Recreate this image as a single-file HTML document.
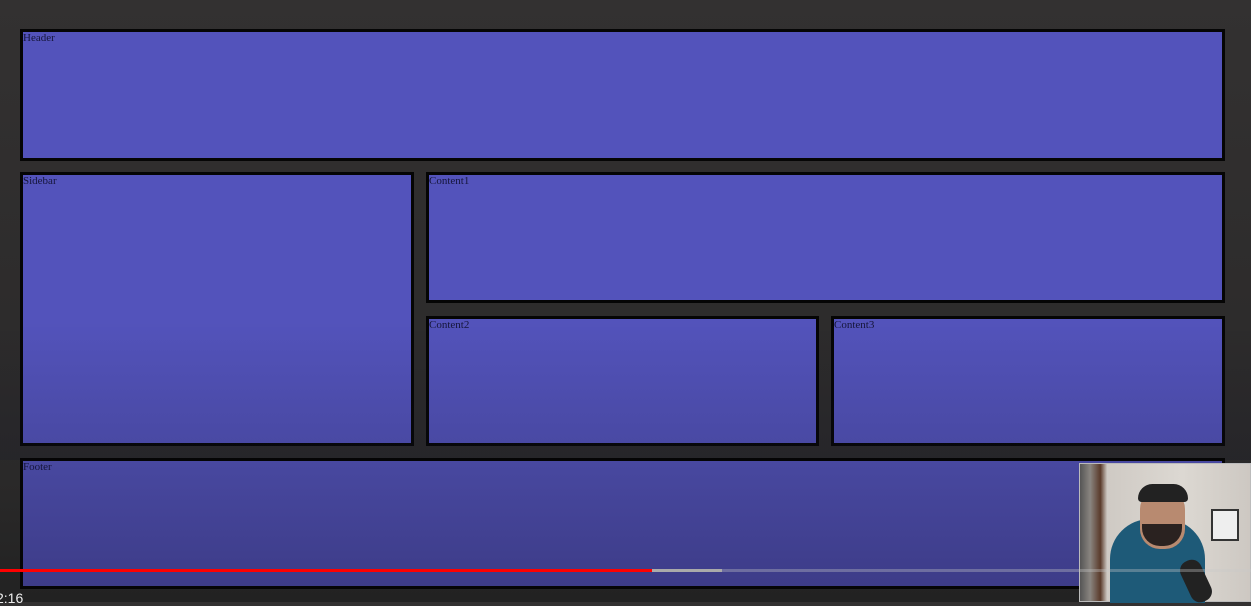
<!DOCTYPE html><html><head><style>
body{margin:0;width:1251px;height:602px;overflow:hidden;background:linear-gradient(#333131,#2a2929 80%,#222);position:relative;font-family:"Liberation Serif",serif;font-size:11px;color:#15153a}
.b{position:absolute;box-sizing:border-box;border:3px solid #050505;background:#5353bb;padding:0 0 0 0;line-height:13px}
.g{position:absolute;left:0;top:0;width:1251px;height:460px;background:linear-gradient(rgba(0,0,0,0) 0,rgba(0,0,0,0) 70%,rgba(20,20,40,.18) 100%);pointer-events:none}
</style></head><body>
<div class="b" style="left:20px;top:29px;width:1205px;height:132px">Header</div>
<div class="b" style="left:20px;top:172px;width:394px;height:274px">Sidebar</div>
<div class="b" style="left:426px;top:172px;width:799px;height:131px">Content1</div>
<div class="b" style="left:426px;top:316px;width:393px;height:130px">Content2</div>
<div class="b" style="left:831px;top:316px;width:394px;height:130px">Content3</div>
<div class="g"></div>
<div class="b" style="left:20px;top:458px;width:1205px;height:131px;background:linear-gradient(#4848a0,#3d3c88)">Footer</div>
<div style="position:absolute;left:1079px;top:463px;width:172px;height:139px;background:linear-gradient(90deg,#555 0,#8a8580 6%,#5a3a2a 12%,#cfcac4 16%,#dcd8d2 60%,#cdc8c2 100%);border:1px solid #bbb;box-sizing:border-box">
<div style="position:absolute;left:30px;top:55px;width:95px;height:84px;background:#1e5a78;border-radius:40px 40px 0 0"></div>
<div style="position:absolute;left:60px;top:25px;width:45px;height:60px;background:#b88a70;border-radius:20px"></div>
<div style="position:absolute;left:58px;top:20px;width:50px;height:18px;background:#222;border-radius:20px 20px 5px 5px"></div>
<div style="position:absolute;left:62px;top:60px;width:40px;height:22px;background:#2a2220;border-radius:0 0 18px 18px"></div>
<div style="position:absolute;left:105px;top:95px;width:22px;height:44px;background:#222;border-radius:10px;transform:rotate(-25deg)"></div>
<div style="position:absolute;left:131px;top:45px;width:24px;height:28px;border:2px solid #333;background:#eee"></div>
</div>
<div style="position:absolute;left:0;top:569px;width:1251px;height:3px;background:rgba(200,200,200,.35)"></div>
<div style="position:absolute;left:652px;top:569px;width:70px;height:3px;background:#aaa"></div>
<div style="position:absolute;left:0;top:569px;width:652px;height:3px;background:#f00"></div>
<div style="position:absolute;left:-4px;top:590px;color:#eee;font-family:'Liberation Sans',sans-serif;font-size:14px">2:16</div>
</body></html>
